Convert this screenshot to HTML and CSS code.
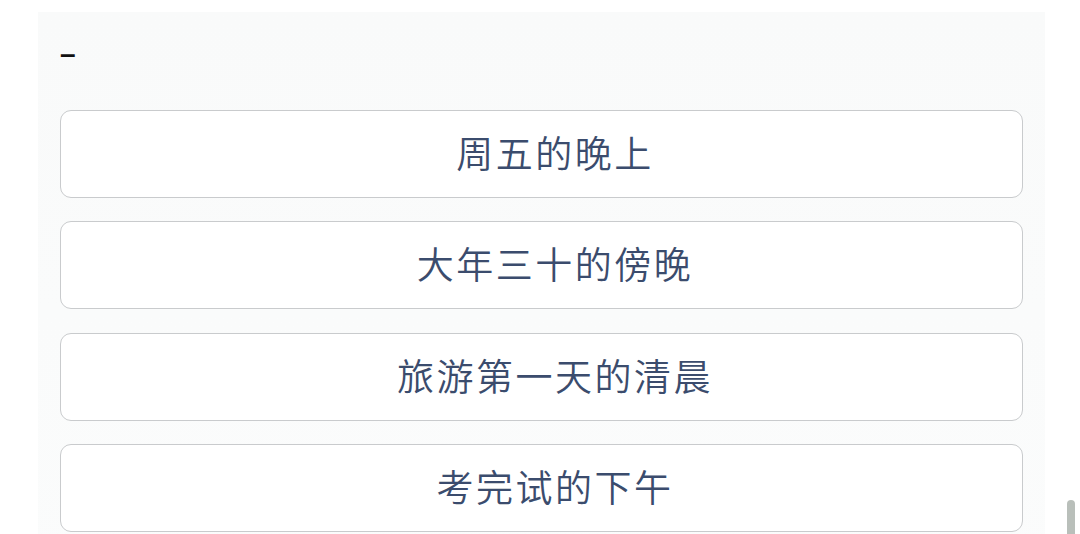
FILE: index.html
```html
<!DOCTYPE html>
<html lang="zh-CN">
<head>
  <meta charset="UTF-8">
  <meta name="viewport" content="width=device-width, initial-scale=1.0">
  <title>选择时间</title>
  <link rel="stylesheet" href="styles.css">
</head>
<body>
  <div class="panel">
    <div class="title">–</div>
    <div class="options">
      <button class="option">周五的晚上</button>
      <button class="option">大年三十的傍晚</button>
      <button class="option">旅游第一天的清晨</button>
      <button class="option">考完试的下午</button>
    </div>
  </div>
  <div class="scroll-thumb"></div>
</body>
</html>
```

FILE: styles.css
```css
html, body { margin: 0; height: 100%; overflow: hidden; background: #fff; }
body { font-family: "Noto Sans CJK SC", "Noto Sans", sans-serif; position: relative; }
.panel {
  margin: 12px 0 0 38px; width: 1007px; height: 600px;
  padding: 24px 22px 0; box-sizing: border-box;
  background: linear-gradient(#f9fafa, #fbfcfc);
}
.title {
  font-family: "Liberation Sans", sans-serif;
  font-size: 28px; line-height: 36px; color: #111; font-weight: bold;
  margin-bottom: 38px;
}
.options { display: flex; flex-direction: column; gap: 23.3px; }
.option {
  height: 88px; width: 100%;
  background: #fff; border: 1px solid #c9cbcd; border-radius: 11px;
  font-family: "Noto Sans CJK SC", sans-serif; font-weight: 350;
  font-size: 37px; letter-spacing: 2.5px; color: #3b4c6d;
  padding: 0 0 4px 27px; cursor: pointer;
}
.scroll-thumb {
  position: absolute; left: 1067px; top: 500px;
  width: 8px; height: 40px; border-radius: 4px; background: #b9bfba;
}
```
